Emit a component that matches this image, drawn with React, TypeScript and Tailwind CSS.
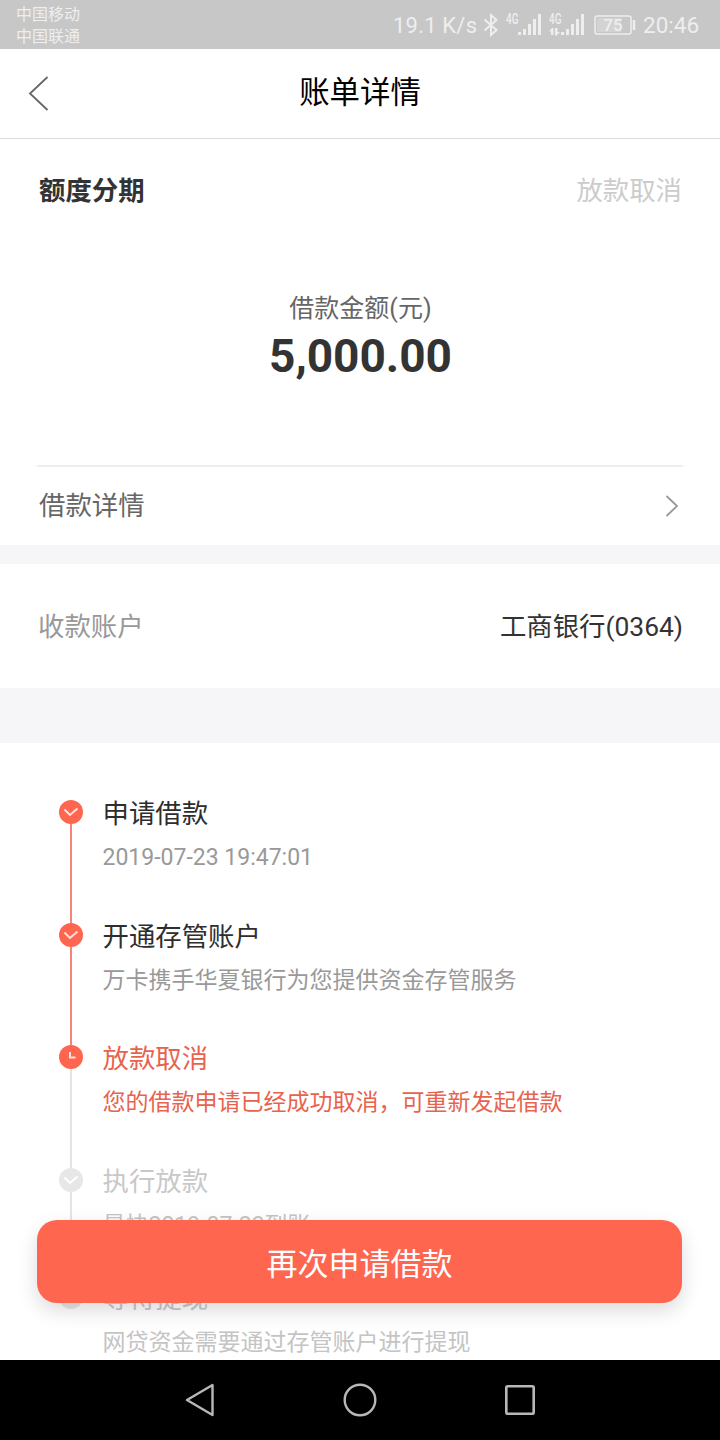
type StepStatus = 'done' | 'current' | 'pending'

interface Step {
  title: string
  detail: string
  status: StepStatus
  height: string
}

const steps: Step[] = [
  { title: '申请借款', detail: '2019-07-23 19:47:01', status: 'done', height: 'h-[123px]' },
  { title: '开通存管账户', detail: '万卡携手华夏银行为您提供资金存管服务', status: 'done', height: 'h-[122px]' },
  { title: '放款取消', detail: '您的借款申请已经成功取消，可重新发起借款', status: 'current', height: 'h-[123px]' },
  { title: '执行放款', detail: '最快2019-07-23到账', status: 'pending', height: 'h-[117px]' },
  { title: '等待提现', detail: '网贷资金需要通过存管账户进行提现', status: 'pending', height: 'h-[75px]' },
]

const titleColors: Record<StepStatus, string> = {
  done: 'text-[#2e2e2e]',
  current: 'text-[#e8634e]',
  pending: 'text-[#c8c8c8]',
}

const detailColors: Record<StepStatus, string> = {
  done: 'text-[#999999]',
  current: 'text-[#e8634e]',
  pending: 'text-[#c4c4c4]',
}

const SignalBars = () => (
  <>
    <rect x="12" y="19" width="3" height="3" />
    <rect x="17" y="16" width="3" height="6" />
    <rect x="22" y="11" width="3" height="11" />
    <rect x="27" y="6" width="3" height="16" />
    <rect x="32" y="1" width="3" height="21" />
  </>
)

const Signal = ({ active }: { active?: boolean }) => (
  <svg width="36" height="36" viewBox="0 -6 36 36" fill="currentColor">
    <text x="0" y="10.500" fontSize="14" fontWeight="500" textLength="12.500" lengthAdjust="spacingAndGlyphs">
      4G
    </text>
    <SignalBars />
    {active && <path d="M3 15 L0 18.500 H2 V22 H4.500 V15 Z M6 15 H8.500 V19 H11 L7.500 22.500 H6 Z" />}
  </svg>
)

const StatusBar = () => (
  <div className="flex h-[49px] shrink-0 items-center justify-between bg-[#c7c7c7] pl-4 pr-5 text-[#eeeeee]">
    <div className="pt-[2px] text-[16px] leading-[22px]">
      <div>中国移动</div>
      <div>中国联通</div>
    </div>
    <div className="flex items-center">
      <span className="w-[84px] whitespace-nowrap pt-[2px] text-[22px] leading-none tracking-[0.2px]">19.1 K/s</span>
      <svg className="ml-[6px] mr-[7px]" width="16" height="24" viewBox="0 0 16 24" fill="none" stroke="currentColor" strokeWidth="2">
        <path d="M1.500 6.500 L13.500 17 L8 22 V2 L13.500 7 L1.500 17.500" />
      </svg>
      <Signal />
      <div className="ml-[7px]">
        <Signal active />
      </div>
      <svg className="ml-[9px]" width="42" height="20" viewBox="0 0 42 20" fill="none" stroke="currentColor">
        <rect x="1" y="1" width="36" height="18" rx="2" strokeWidth="1.500" />
        <rect x="3" y="3" width="24" height="14" fill="currentColor" stroke="none" opacity="0.3" />
        <path d="M40 5 V15" strokeWidth="2.500" />
        <text x="19" y="16" fontSize="17" fontWeight="500" textAnchor="middle" fill="currentColor" stroke="none">
          75
        </text>
      </svg>
      <span className="ml-[7px] w-[57px] whitespace-nowrap pt-[2px] text-[22.5px] leading-none">20:46</span>
    </div>
  </div>
)

const StepIcon = ({ status }: { status: StepStatus }) => (
  <svg className="shrink-0" width="24" height="24" viewBox="0 0 24 24" fill="none">
    <circle cx="12" cy="12" r="12" fill={status === 'pending' ? '#e7e7e7' : '#ff6650'} />
    {status === 'current' ? (
      <path d="M11 7 V12.500 H16.500" stroke="#ffe0da" strokeWidth="2" />
    ) : (
      <path
        d="M5.500 9.500 L11 15 L18.500 8.500"
        stroke={status === 'pending' ? '#ffffff' : '#ffe0da'}
        strokeWidth="2"
      />
    )}
  </svg>
)

const TimelineStep = ({ step, last }: { step: Step; last: boolean }) => (
  <div className={`flex shrink-0 ${step.height}`}>
    <div className="flex w-6 flex-col items-center">
      <StepIcon status={step.status} />
      {!last && <div className={`w-[2px] flex-1 ${step.status === 'done' ? 'bg-[#f58576]' : 'bg-[#e4e4e4]'}`} />}
    </div>
    <div className="ml-[19.5px] whitespace-nowrap pt-[2px]">
      <div className={`h-6 text-[26.4px] leading-6 ${titleColors[step.status]}`}>{step.title}</div>
      <div className={`mt-5 h-6 text-[23px] leading-6 ${detailColors[step.status]}`}>{step.detail}</div>
    </div>
  </div>
)

export default function App() {
  return (
    <div className="relative flex h-[1440px] w-[720px] flex-col overflow-hidden bg-white font-['Roboto','Noto_Sans_CJK_SC',sans-serif] text-[#333333]">
      <StatusBar />

      <header className="grid h-[90px] shrink-0 grid-cols-[1fr_auto_1fr] items-center border-b border-[#dcdcdc] px-7">
        <svg width="22" height="36" viewBox="0 0 22 36" fill="none" stroke="#666666" strokeWidth="1.800">
          <path d="M19.500 1 L2 17.500 L19.500 34" />
        </svg>
        <h1 className="pb-[2px] text-[30.4px] leading-10 text-black">账单详情</h1>
      </header>

      <section className="shrink-0 px-[37px]">
        <div className="flex h-[100px] items-center justify-between pl-[2px] pr-px pt-[5px] text-[26.4px]">
          <span className="font-bold">额度分期</span>
          <span className="text-[#cccccc]">放款取消</span>
        </div>
        <div className="flex h-[228px] flex-col items-center border-b-2 border-[#eeeeee] pl-px pt-[52px]">
          <div className="text-[25px] leading-9 text-[#666666]">借款金额(元)</div>
          <div className="mt-[2px] text-[46px] font-bold leading-[54px]">5,000.00</div>
        </div>
        <div className="flex h-[78px] items-center justify-between pl-[2px] text-[26.4px] text-[#666666]">
          <span className="pt-[2px]">借款详情</span>
          <svg className="mb-px mr-[3px]" width="16" height="24" viewBox="0 0 16 24" fill="none" stroke="#999999" strokeWidth="1.800">
            <path d="M2.500 2 L13 12 L2.500 22" />
          </svg>
        </div>
      </section>

      <div className="h-[19px] shrink-0 bg-[#f6f6f8]" />

      <section className="flex h-[124px] shrink-0 items-center justify-between pl-[38px] pr-[37px] pt-1 text-[26.4px]">
        <span className="text-[#999999]">收款账户</span>
        <span>工商银行(0364)</span>
      </section>

      <div className="h-[55px] shrink-0 bg-[#f6f6f8]" />

      <section className="flex min-h-0 flex-1 flex-col overflow-hidden pl-[59px] pt-[57px]">
        {steps.map((step, idx) => (
          <TimelineStep key={step.title} step={step} last={idx === steps.length - 1} />
        ))}
      </section>

      {/* floats over the timeline */}
      <button className="absolute bottom-[137px] left-[37px] h-[83px] w-[645px] rounded-[20px] bg-[#ff6650] pt-[6px] text-[31px] leading-none text-white shadow-[0_8px_20px_rgba(0,0,0,0.14)]">
        再次申请借款
      </button>

      <nav className="flex h-20 shrink-0 items-center justify-center gap-[120px] bg-black">
        <svg width="40" height="40" viewBox="0 0 40 40" fill="none" stroke="#b8b8b8" strokeWidth="2.400" strokeLinejoin="round">
          <path d="M7 20 L32.500 5 V35 Z" />
        </svg>
        <svg width="40" height="40" viewBox="0 0 40 40" fill="none" stroke="#b8b8b8" strokeWidth="2.400">
          <circle cx="20" cy="20" r="15.300" />
        </svg>
        <svg width="40" height="40" viewBox="0 0 40 40" fill="none" stroke="#b8b8b8" strokeWidth="2.600">
          <rect x="6.300" y="6.300" width="27.400" height="27.400" rx="1.500" />
        </svg>
      </nav>
    </div>
  )
}
